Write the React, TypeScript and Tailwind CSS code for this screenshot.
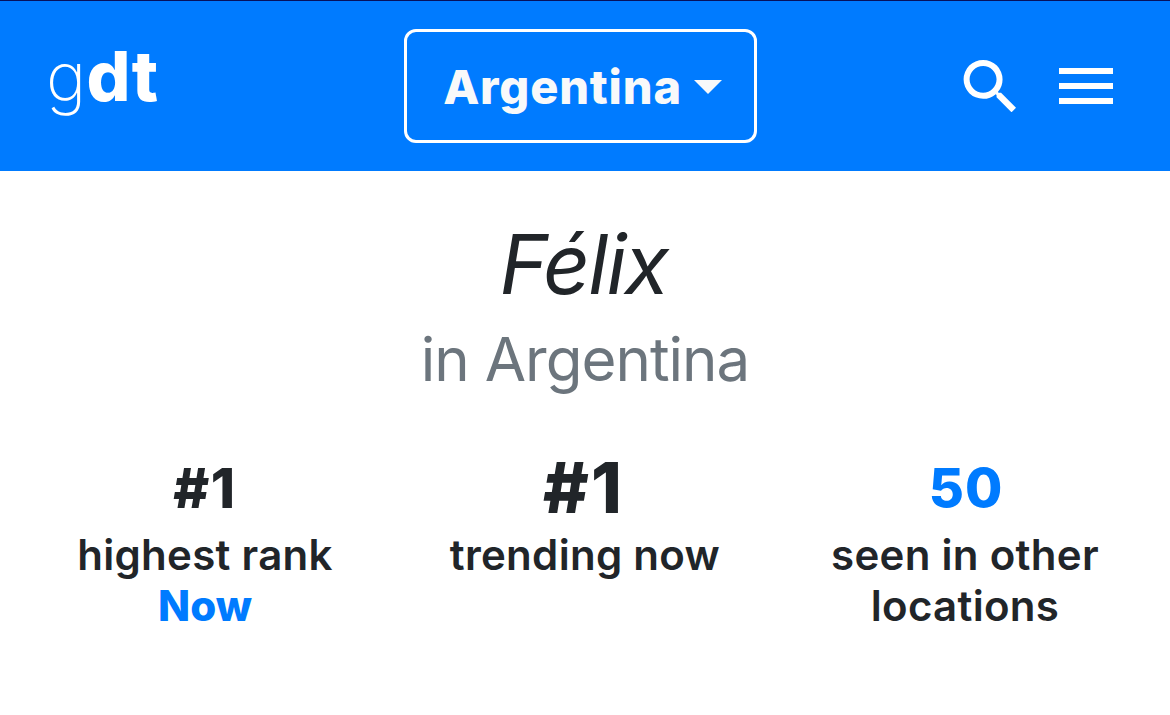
export default function App() {
  return (
    <div className="h-[715px] w-[1170px] overflow-hidden bg-white font-['Inter',sans-serif] text-[#212529]">
      <header className="grid h-[171px] grid-cols-[404px_353px_1fr] border-t border-[#06115c] bg-[#007bff] pt-7 text-white">
        <div className="pl-[46px] pt-[7px] text-[69px] leading-[80px] font-extrabold tracking-[0.3px]">
          <span className="text-[68px] font-extralight tracking-[0.3px]">g</span>dt
        </div>
        <button className="flex h-[114px] items-center justify-center gap-[12px] rounded-[12px] border-3 border-white pt-[2px] pl-[4px] text-[47px] font-extrabold tracking-[0.8px] text-[#f8f9fa]">
          <span>Argentina</span>
          <svg width="28" height="14" viewBox="0 0 28 14" fill="currentColor"><path d="M0 0h28L14 14z" /></svg>
        </button>
        <div className="flex pl-[206px] pt-[30px]">
          <svg width="53" height="53" viewBox="2.800 2.700 17.690 17.690" fill="currentColor">
            <path d="M15.5 14h-.79l-.28-.27A6.471 6.471 0 0 0 16 9.500 6.500 6.500 0 1 0 9.500 16c1.610 0 3.090-.59 4.230-1.570l.27.280v.790l5 4.990L20.490 19l-4.990-5zm-6 0C7.010 14 5 11.990 5 9.500S7.010 5 9.500 5 14 7.010 14 9.500 11.990 14 9.500 14z" />
          </svg>
          <svg className="ml-[43px] mt-[9px]" width="54" height="36" viewBox="0 0 54 36" fill="currentColor">
            <path d="M0 0h54v6H0zM0 15h54v6H0zM0 30h54v6H0z" />
          </svg>
        </div>
      </header>
      <main>
        <h1 className="pt-[46px] pr-[3px] text-center text-[82px] leading-[96px] font-normal tracking-[-1.8px] italic">Félix</h1>
        <p className="pt-[6px] text-center text-[60px] leading-[80px] tracking-[-1px] text-[#6c757d]">in Argentina</p>
        <div className="grid grid-cols-[390px_390px_390px] pt-[45px] text-center text-[42px] leading-[51px] font-semibold tracking-[0.3px]">
          <div className="pl-[20px]">
            <div className="h-[85px] text-[55px] leading-[88px] font-extrabold tracking-[1.5px]">#1</div>
            <div>highest rank</div>
            <div className="font-extrabold tracking-normal text-[#007bff]">Now</div>
          </div>
          <div>
            <div className="h-[85px] pr-[3px] text-[70px] leading-[88px] font-extrabold tracking-[2px]">#1</div>
            <div>trending now</div>
          </div>
          <div className="pr-[20px]">
            <div className="h-[85px] pl-[2px] text-[54px] leading-[88px] font-extrabold tracking-[1px] text-[#007bff]">50</div>
            <div>seen in other</div>
            <div>locations</div>
          </div>
        </div>
      </main>
    </div>
  );
}
